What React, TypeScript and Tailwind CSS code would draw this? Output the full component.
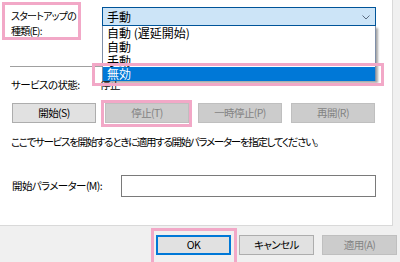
import React from "react";

const PINK = "border-[3px] border-[#f2a8c7]";

function Btn({
  label,
  disabled,
  primary,
  className = "",
}: {
  label: string;
  disabled?: boolean;
  primary?: boolean;
  className?: string;
}) {
  const look = disabled
    ? "bg-[#cccccc] border border-[#bfbfbf] text-[#838383]"
    : primary
      ? "bg-[#e1e1e1] border-2 border-[#0078d7] text-black"
      : "bg-[#e1e1e1] border border-[#adadad] text-black";
  return (
    <div className={`flex items-center justify-center h-[20px] ${look} ${className}`}>
      {label}
    </div>
  );
}

const OPTIONS = ["自動 (遅延開始)", "自動", "手動", "無効"];

export default function App() {
  return (
    <div className="relative w-[400px] h-[262px] overflow-hidden bg-[#f0f0f0] text-black font-['Noto_Sans_CJK_JP','Noto_Sans',sans-serif] [font-feature-settings:'palt'] text-[10.5px] tracking-[-0.6px] leading-none">
      {/* property page */}
      <div className="w-[393px] h-[226px] bg-white border-r border-b border-[#d9d9d9] pl-[11px] pt-[7px]">
        {/* startup type */}
        <div className="flex h-[19px]">
          <div className="w-[91px] pt-px leading-[15px] text-[10px] tracking-[-0.8px]">
            スタートアップの
            <br />
            種類(E):
          </div>
          <div className="relative w-[274px] h-[19px] bg-[#cce4f7] border border-[#005499] flex items-center pl-[4px] text-[12px] tracking-normal">
            手動
            <svg
              className="absolute right-[5px] top-[7px]"
              width="8"
              height="5"
              viewBox="0 0 8 5"
              fill="none"
            >
              <path d="M0.5 0.5 L4 4 L7.5 0.5" stroke="#5a6b80" strokeWidth="1" />
            </svg>
            {/* open list */}
            <div className="absolute left-[-1px] top-[18px] w-[274px] bg-white border-l border-r border-[#7f8fa8] shadow-[2px_2px_2px_rgba(0,0,0,0.35)] text-[12px]">
              {OPTIONS.map((o, i) => (
                <div
                  key={o}
                  className={`flex items-center pl-[4px] ${
                    i === 2 ? "h-[13px]" : "h-[14px]"
                  } ${i === 3 ? "bg-[#0078d7] text-white" : ""}`}
                >
                  {o}
                </div>
              ))}
            </div>
          </div>
        </div>

        <div className="mt-[40px] ml-[-1px] w-[366px] h-px bg-[#a0a0a0]" />

        {/* status */}
        <div className="mt-[12px] h-[12px] flex items-center">
          <span className="w-[89px]">サービスの状態:</span>
          <span>停止</span>
        </div>

        {/* service buttons */}
        <div className="mt-[12px] flex gap-[9px] pl-px">
          <Btn label="開始(S)" className="w-[84px]" />
          <Btn label="停止(T)" disabled className="w-[84px]" />
          <Btn label="一時停止(P)" disabled className="w-[84px]" />
          <Btn label="再開(R)" disabled className="w-[84px]" />
        </div>

        <div className="mt-[13px] h-[12px] flex items-center tracking-[-1.3px]">
          ここでサービスを開始するときに適用する開始パラメーターを指定してください。
        </div>

        {/* start parameters */}
        <div className="mt-[27px] flex items-center">
          <span className="w-[110px] pl-px">開始パラメーター(M):</span>
          <div className="w-[255px] h-[22px] bg-white border border-[#7a7a7a]" />
        </div>
      </div>

      {/* dialog buttons */}
      <div className="flex gap-[8px] pl-[156px] pt-[9px]">
        <Btn label="OK" primary className="w-[75px]" />
        <Btn label="キャンセル" className="w-[75px]" />
        <Btn label="適用(A)" disabled className="w-[75px]" />
      </div>

      {/* highlight marks */}
      <div className={`absolute left-[2px] top-[2px] w-[79px] h-[38px] ${PINK}`} />
      <div className={`absolute left-[92px] top-[63px] w-[292px] h-[23px] ${PINK}`} />
      <div className={`absolute left-[101px] top-[100px] w-[91px] h-[27px] ${PINK}`} />
      <div className={`absolute left-[151px] top-[228px] w-[86px] h-[40px] ${PINK}`} />
    </div>
  );
}
